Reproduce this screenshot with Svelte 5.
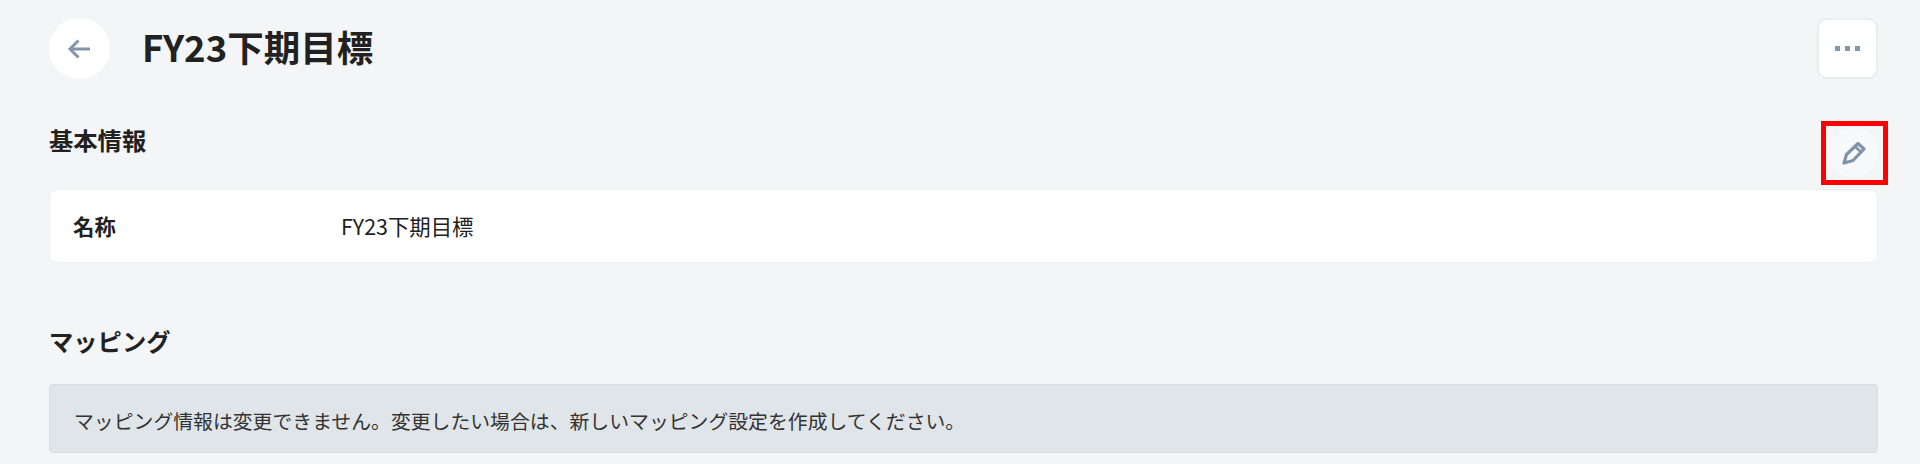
<script lang="ts">
	const title = 'FY23下期目標';
</script>

<div class="page">
	<header class="page-header">
		<button class="back-btn" aria-label="戻る">
			<svg width="26" height="26" viewBox="0 0 26 26" fill="none" stroke="#8496aa" stroke-width="3">
				<path d="M23 13H3M11.5 4.5 3 13l8.5 8.5" />
			</svg>
		</button>
		<h1>{title}</h1>
		<button class="more-btn" aria-label="その他">
			<span></span><span></span><span></span>
		</button>
	</header>

	<section class="basic">
		<div class="section-head">
			<h2>基本情報</h2>
			<div class="edit-wrap">
				<button class="edit-btn" aria-label="編集">
					<svg width="24" height="24" viewBox="0 0 24 24" fill="none" stroke="#8093a8" stroke-width="3.2" stroke-linejoin="round">
						<path d="M2 22 4.5 13.5 16 2.5 22 8 11 19.5Z" />
						<path d="M13 5.5l6 5.5" stroke-width="2.6" />
					</svg>
				</button>
				<div class="highlight"></div>
			</div>
		</div>
		<div class="card">
			<div class="label">名称</div>
			<div class="value">{title}</div>
		</div>
	</section>

	<section class="mapping">
		<h2>マッピング</h2>
		<div class="notice">マッピング情報は変更できません。変更したい場合は、新しいマッピング設定を作成してください。</div>
	</section>
</div>

<style>
	:global(body) {
		background: #f4f5f7;
	}
	.page {
		height: 464px;
		box-sizing: border-box;
		padding: 18px 42px 0 49px;
		font-family: "Noto Sans CJK JP", "Noto Sans", sans-serif;
		color: #212121;
		background: #f4f5f7;
		overflow: hidden;
	}
	button {
		padding: 0;
		cursor: pointer;
		background: #fff;
		display: flex;
		align-items: center;
		justify-content: center;
	}
	.page-header {
		display: flex;
		align-items: center;
		height: 61px;
	}
	.back-btn {
		width: 61px;
		height: 61px;
		border: none;
		border-radius: 50%;
	}
	h1 {
		margin: 0 0 4px 32px;
		flex: 1;
		font-size: 36.5px;
		font-weight: 700;
		line-height: 46px;
	}
	.more-btn {
		width: 61px;
		height: 61px;
		gap: 5px;
		box-sizing: border-box;
		border: 2px solid #e9edf1;
		border-radius: 10px;
	}
	.more-btn span {
		width: 5px;
		height: 5px;
		background: #8496aa;
	}
	.basic {
		margin-top: 49px;
	}
	.section-head {
		display: flex;
		justify-content: space-between;
		height: 61px;
	}
	h2 {
		margin: 0;
		font-size: 24.3px;
		font-weight: 700;
		line-height: 32px;
	}
	.section-head h2 {
		margin-top: -4px;
	}
	.edit-wrap {
		position: relative;
		width: 49px;
		height: 49px;
	}
	.edit-btn {
		width: 49px;
		height: 49px;
		border: none;
		border-radius: 50%;
		background: #f8f9fa;
	}
	.highlight {
		position: absolute;
		left: -8px;
		top: -7px;
		width: 67px;
		height: 64px;
		box-sizing: border-box;
		border: 5px solid #fe0000;
	}
	.card {
		display: flex;
		align-items: center;
		height: 74px;
		box-sizing: border-box;
		padding: 0 0 2px 23px;
		background: #fff;
		border: 1px solid #eef0f3;
		border-radius: 8px;
		font-size: 21.4px;
	}
	.label {
		width: 268px;
		font-weight: 700;
	}
	.mapping {
		margin-top: 62px;
	}
	.mapping h2 {
		margin-bottom: 27px;
	}
	.notice {
		height: 69px;
		box-sizing: border-box;
		padding: 3px 0 0 24px;
		display: flex;
		align-items: center;
		background: #e0e5e9;
		border: 1px solid #d8dde2;
		border-radius: 4px;
		font-size: 19.85px;
		color: #333;
	}
</style>
